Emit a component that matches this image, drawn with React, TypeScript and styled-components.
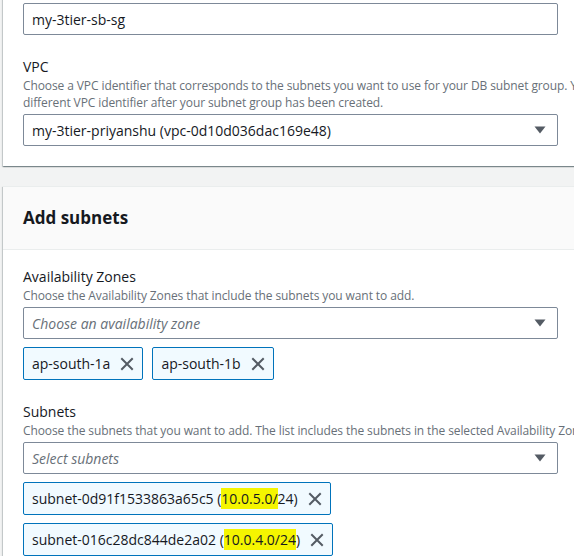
import type { ReactElement, ReactNode } from 'react'
import styled, { createGlobalStyle } from 'styled-components'

const GlobalStyle = createGlobalStyle`
  html, body {
    margin: 0;
    padding: 0;
    background: #f2f3f3;
    overflow: hidden;
  }
  body {
    font-family: 'Open Sans', 'Noto Sans', Arial, sans-serif;
    color: #16191f;
  }
`

type TokenType = { id: string; prefix?: string; marked?: string; rest?: string; suffix?: string }

const zones: TokenType[] = [{ id: 'ap-south-1a' }, { id: 'ap-south-1b' }]

const subnets: TokenType[] = [
  { id: 'subnet-0d91f1533863a65c5', prefix: ' (', marked: '10.0.5.0/', rest: '24', suffix: ')' },
  { id: 'subnet-016c28dc844de2a02', prefix: ' (', marked: '10.0.4.0/24', rest: '', suffix: ')' },
]

const CloseIcon = (): ReactElement => (
  <svg width="14" height="14" viewBox="0 0 14 14" fill="none">
    <path d="M2 2L12 12M12 2L2 12" stroke="#545b64" strokeWidth="2" strokeLinecap="square" />
  </svg>
)

const Caret = (): ReactElement => (
  <svg width="12" height="8" viewBox="0 0 12 8">
    <path d="M0.5 0.5H11.5L6 7.5Z" fill="#545b64" />
  </svg>
)

type FieldProps = { label: string; description?: ReactNode; children: ReactNode }

const Field = ({ label, description, children }: FieldProps): ReactElement => (
  <FieldWrapper>
    <Label>{label}</Label>
    {description ? <Description>{description}</Description> : null}
    <Control>{children}</Control>
  </FieldWrapper>
)

const SelectBox = ({ value, placeholder }: { value?: string; placeholder?: string }): ReactElement => (
  <Select>
    {value ? <SelectValue>{value}</SelectValue> : <Placeholder>{placeholder}</Placeholder>}
    <Caret />
  </Select>
)

const TokenItem = ({ token }: { token: TokenType }): ReactElement => (
  <Token>
    <TokenText>
      {token.id}
      {token.prefix}
      {token.marked ? <Mark>{token.marked}</Mark> : null}
      {token.rest}
      {token.suffix}
    </TokenText>
    <CloseIcon />
  </Token>
)

const App = (): ReactElement => {
  return (
    <>
      <GlobalStyle />
      <Page>
        <FirstCard>
          <CardBody>
            <FieldWrapper>
              <Input>my-3tier-sb-sg</Input>
            </FieldWrapper>
            <Field
              label="VPC"
              description={
                <>
                  Choose a VPC identifier that corresponds to the subnets you want to use for your DB subnet group. You can't choose a
                  <br />
                  different VPC identifier after your subnet group has been created.
                </>
              }>
              <SelectBox value="my-3tier-priyanshu (vpc-0d10d036dac169e48)" />
            </Field>
          </CardBody>
        </FirstCard>
        <Card>
          <CardHeader>
            <Title>Add subnets</Title>
          </CardHeader>
          <CardBody $top={17}>
            <Field
              label="Availability Zones"
              description="Choose the Availability Zones that include the subnets you want to add.">
              <SelectBox placeholder="Choose an availability zone" />
              <TokenList>
                {zones.map(zone => (
                  <TokenItem key={zone.id} token={zone} />
                ))}
              </TokenList>
            </Field>
            <Field
              label="Subnets"
              description="Choose the subnets that you want to add. The list includes the subnets in the selected Availability Zones.">
              <SelectBox placeholder="Select subnets" />
              <TokenList>
                {subnets.map(subnet => (
                  <TokenItem key={subnet.id} token={subnet} />
                ))}
              </TokenList>
            </Field>
          </CardBody>
        </Card>
      </Page>
    </>
  )
}

export default App

const Page = styled.div`
  width: 860px;
  padding-left: 3px;
`

const Card = styled.section`
  background: #fff;
  border-top: 1px solid #eaeded;
  box-shadow: 0 1px 1px 0 rgba(0, 28, 36, 0.3), 1px 1px 1px 0 rgba(0, 28, 36, 0.15),
    -1px 1px 1px 0 rgba(0, 28, 36, 0.15);
  margin-bottom: 20px;
`

const FirstCard = styled(Card)`
  margin-top: -18px;
`

const CardHeader = styled.header`
  background: #fafafa;
  border-bottom: 1px solid #eaeded;
  padding: 20px;
`

const Title = styled.h2`
  margin: 0;
  font-size: 17px;
  line-height: 22px;
  font-weight: 700;
  color: #16191f;
`

const CardBody = styled.div<{ $top?: number }>`
  padding: ${props => props.$top ?? 20}px 20px 20px;
  display: flex;
  flex-direction: column;
  gap: 22px;
`

const FieldWrapper = styled.div`
  display: flex;
  flex-direction: column;
`

const Label = styled.label`
  font-size: 14px;
  line-height: 20px;
  color: #16191f;
`

const Description = styled.p`
  margin: 0;
  font-size: 12px;
  line-height: 17px;
  letter-spacing: -0.1px;
  color: #687078;
  white-space: nowrap;
`

const Control = styled.div`
  margin-top: 3px;
`

const Input = styled.div`
  box-sizing: border-box;
  width: 535px;
  height: 32px;
  display: flex;
  align-items: center;
  padding: 0 8px;
  border: 1px solid #7d8998;
  border-radius: 2px;
  background: #fff;
  font-size: 14px;
  color: #16191f;
`

const Select = styled(Input)`
  justify-content: space-between;
  padding-right: 11px;
`

const SelectValue = styled.span`
  color: #16191f;
`

const Placeholder = styled.span`
  color: #687078;
  font-style: italic;
`

const TokenList = styled.div`
  display: flex;
  flex-wrap: wrap;
  gap: 8px 9px;
  margin-top: 8px;
  width: 535px;
`

const Token = styled.div`
  box-sizing: border-box;
  height: 33px;
  display: inline-flex;
  align-items: center;
  gap: 10px;
  padding: 0 8px;
  border: 1px solid #0073bb;
  border-radius: 2px;
  background: #f1faff;
  font-size: 14px;
  color: #16191f;
`

const TokenText = styled.span`
  white-space: nowrap;
`

const Mark = styled.mark`
  background: #f5f500;
  color: #16191f;
  padding: 1px 0;
`
